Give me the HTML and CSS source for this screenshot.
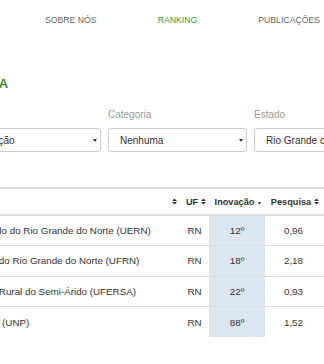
FILE: index.html
```html
<!DOCTYPE html>
<html>
<head>
  <meta charset="UTF-8">
  <link rel="stylesheet" href="styles.css">
  <title>Ranking</title>
</head>
<body>
  <nav class="nav">
    <a class="nav-link" href="#">Sobre nós</a>
    <a class="nav-link active" href="#">Ranking</a>
    <a class="nav-link" href="#">Publicações</a>
  </nav>

  <h1 class="title">Pesquisa</h1>

  <div class="filters">
    <div class="field">
      <label class="field-label">Índice</label>
      <div class="select"><span>Inovação</span><i class="caret"></i></div>
    </div>
    <div class="field">
      <label class="field-label">Categoria</label>
      <div class="select"><span>Nenhuma</span><i class="caret"></i></div>
    </div>
    <div class="field">
      <label class="field-label">Estado</label>
      <div class="select"><span>Rio Grande do Norte</span><i class="caret"></i></div>
    </div>
  </div>

  <table class="ranking">
    <colgroup>
      <col class="c-name"><col class="c-uf"><col class="c-inov"><col class="c-pesq"><col class="c-extra">
    </colgroup>
    <thead>
      <tr>
        <th><div class="th"><span class="th-label left">Instituição</span><svg class="sort" viewBox="0 0 6 8"><path d="M0 3.4L3 0.4L6 3.4Z M0 4.6L3 7.6L6 4.6Z"/></svg></div></th>
        <th><div class="th"><span class="th-label">UF</span><svg class="sort" viewBox="0 0 6 8"><path d="M0 3.4L3 0.4L6 3.4Z M0 4.6L3 7.6L6 4.6Z"/></svg></div></th>
        <th><div class="th"><span class="th-label">Inovação</span><svg class="sort" viewBox="0 0 6 8"><path d="M0.5 5L3 7.6L5.5 5Z"/></svg></div></th>
        <th><div class="th"><span class="th-label">Pesquisa</span><svg class="sort" viewBox="0 0 6 8"><path d="M0 3.4L3 0.4L6 3.4Z M0 4.6L3 7.6L6 4.6Z"/></svg></div></th>
        <th><div class="th"><span class="th-label">Ensino</span><svg class="sort" viewBox="0 0 6 8"><path d="M0 3.4L3 0.4L6 3.4Z M0 4.6L3 7.6L6 4.6Z"/></svg></div></th>
      </tr>
    </thead>
    <tbody>
      <tr>
        <td class="name">Universidade do Estado do Rio Grande do Norte (UERN)</td>
        <td>RN</td><td class="sorted">12º</td><td>0,96</td><td>1,04</td>
      </tr>
      <tr>
        <td class="name">Universidade Federal do Rio Grande do Norte (UFRN)</td>
        <td>RN</td><td class="sorted">18º</td><td>2,18</td><td>2,35</td>
      </tr>
      <tr>
        <td class="name">Universidade Federal Rural do Semi-Árido (UFERSA)</td>
        <td>RN</td><td class="sorted">22º</td><td>0,93</td><td>0,88</td>
      </tr>
      <tr>
        <td class="name">Universidade Potiguar (UNP)</td>
        <td>RN</td><td class="sorted">88º</td><td>1,52</td><td>0,71</td>
      </tr>
    </tbody>
  </table>
</body>
</html>
```

FILE: styles.css
```css
* {
  margin: 0;
  padding: 0;
  box-sizing: border-box;
}

html, body {
  overflow: hidden;
}

body {
  width: 324px;
  height: 364px;
  font-family: "Liberation Sans", Arial, sans-serif;
  color: #333;
  background: #fff;
}

.nav {
  height: 40px;
  display: flex;
  align-items: center;
  gap: 61px;
  padding-left: 45px;
  white-space: nowrap;
}

.nav-link {
  font-size: 8.7px;
  text-transform: uppercase;
  color: #666;
  text-decoration: none;
}

.nav-link.active {
  color: #2f9a3f;
}

.title {
  margin: 36px 0 0 -59px;
  font-size: 13px;
  line-height: 16px;
  font-weight: bold;
  text-transform: uppercase;
  color: #3d8b37;
  white-space: nowrap;
}

.filters {
  display: grid;
  grid-template-columns: 139px 139px 139px;
  gap: 7px;
  margin: 16px 0 0 -38px;
  width: 431px;
}

.field-label {
  display: block;
  font-size: 10px;
  line-height: 14px;
  color: #999;
  margin-bottom: 6px;
}

.select {
  height: 24px;
  display: flex;
  align-items: center;
  justify-content: space-between;
  padding: 0 3px 0 11px;
  border: 1px solid #ccc;
  border-radius: 3px;
  font-size: 10px;
  color: #333;
  white-space: nowrap;
  overflow: hidden;
}

.caret {
  flex: none;
  width: 0;
  height: 0;
  border-left: 2px solid transparent;
  border-right: 2px solid transparent;
  border-top: 3px solid #333;
}

.ranking {
  margin: 35px 0 0 -105px;
  border-collapse: collapse;
  table-layout: fixed;
  width: 484px;
  border-top: 2px solid #ddd;
}

.c-name { width: 285px; }
.c-uf { width: 29px; }
.c-inov { width: 56px; }
.c-pesq { width: 57px; }
.c-extra { width: 57px; }

.ranking th {
  height: 27px;
  padding: 0 3px;
  border-bottom: 2px solid #ddd;
  font-size: 9.2px;
  font-weight: bold;
}

.th {
  display: flex;
  align-items: center;
}

.th-label {
  flex: 1;
  text-align: center;
  white-space: nowrap;
}

.th-label.left {
  text-align: left;
  padding-left: 5px;
}

.sort {
  flex: none;
  width: 5px;
  height: 7px;
  fill: #333;
}

.ranking td {
  height: 30.5px;
  border-bottom: 1px solid #ddd;
  font-size: 9.8px;
  text-align: center;
  white-space: nowrap;
}

.ranking tbody tr:last-child td {
  border-bottom: none;
}

.ranking td.name {
  text-align: left;
  padding-left: 8px;
}

.ranking td.sorted {
  background: #dce6f1;
}
```
